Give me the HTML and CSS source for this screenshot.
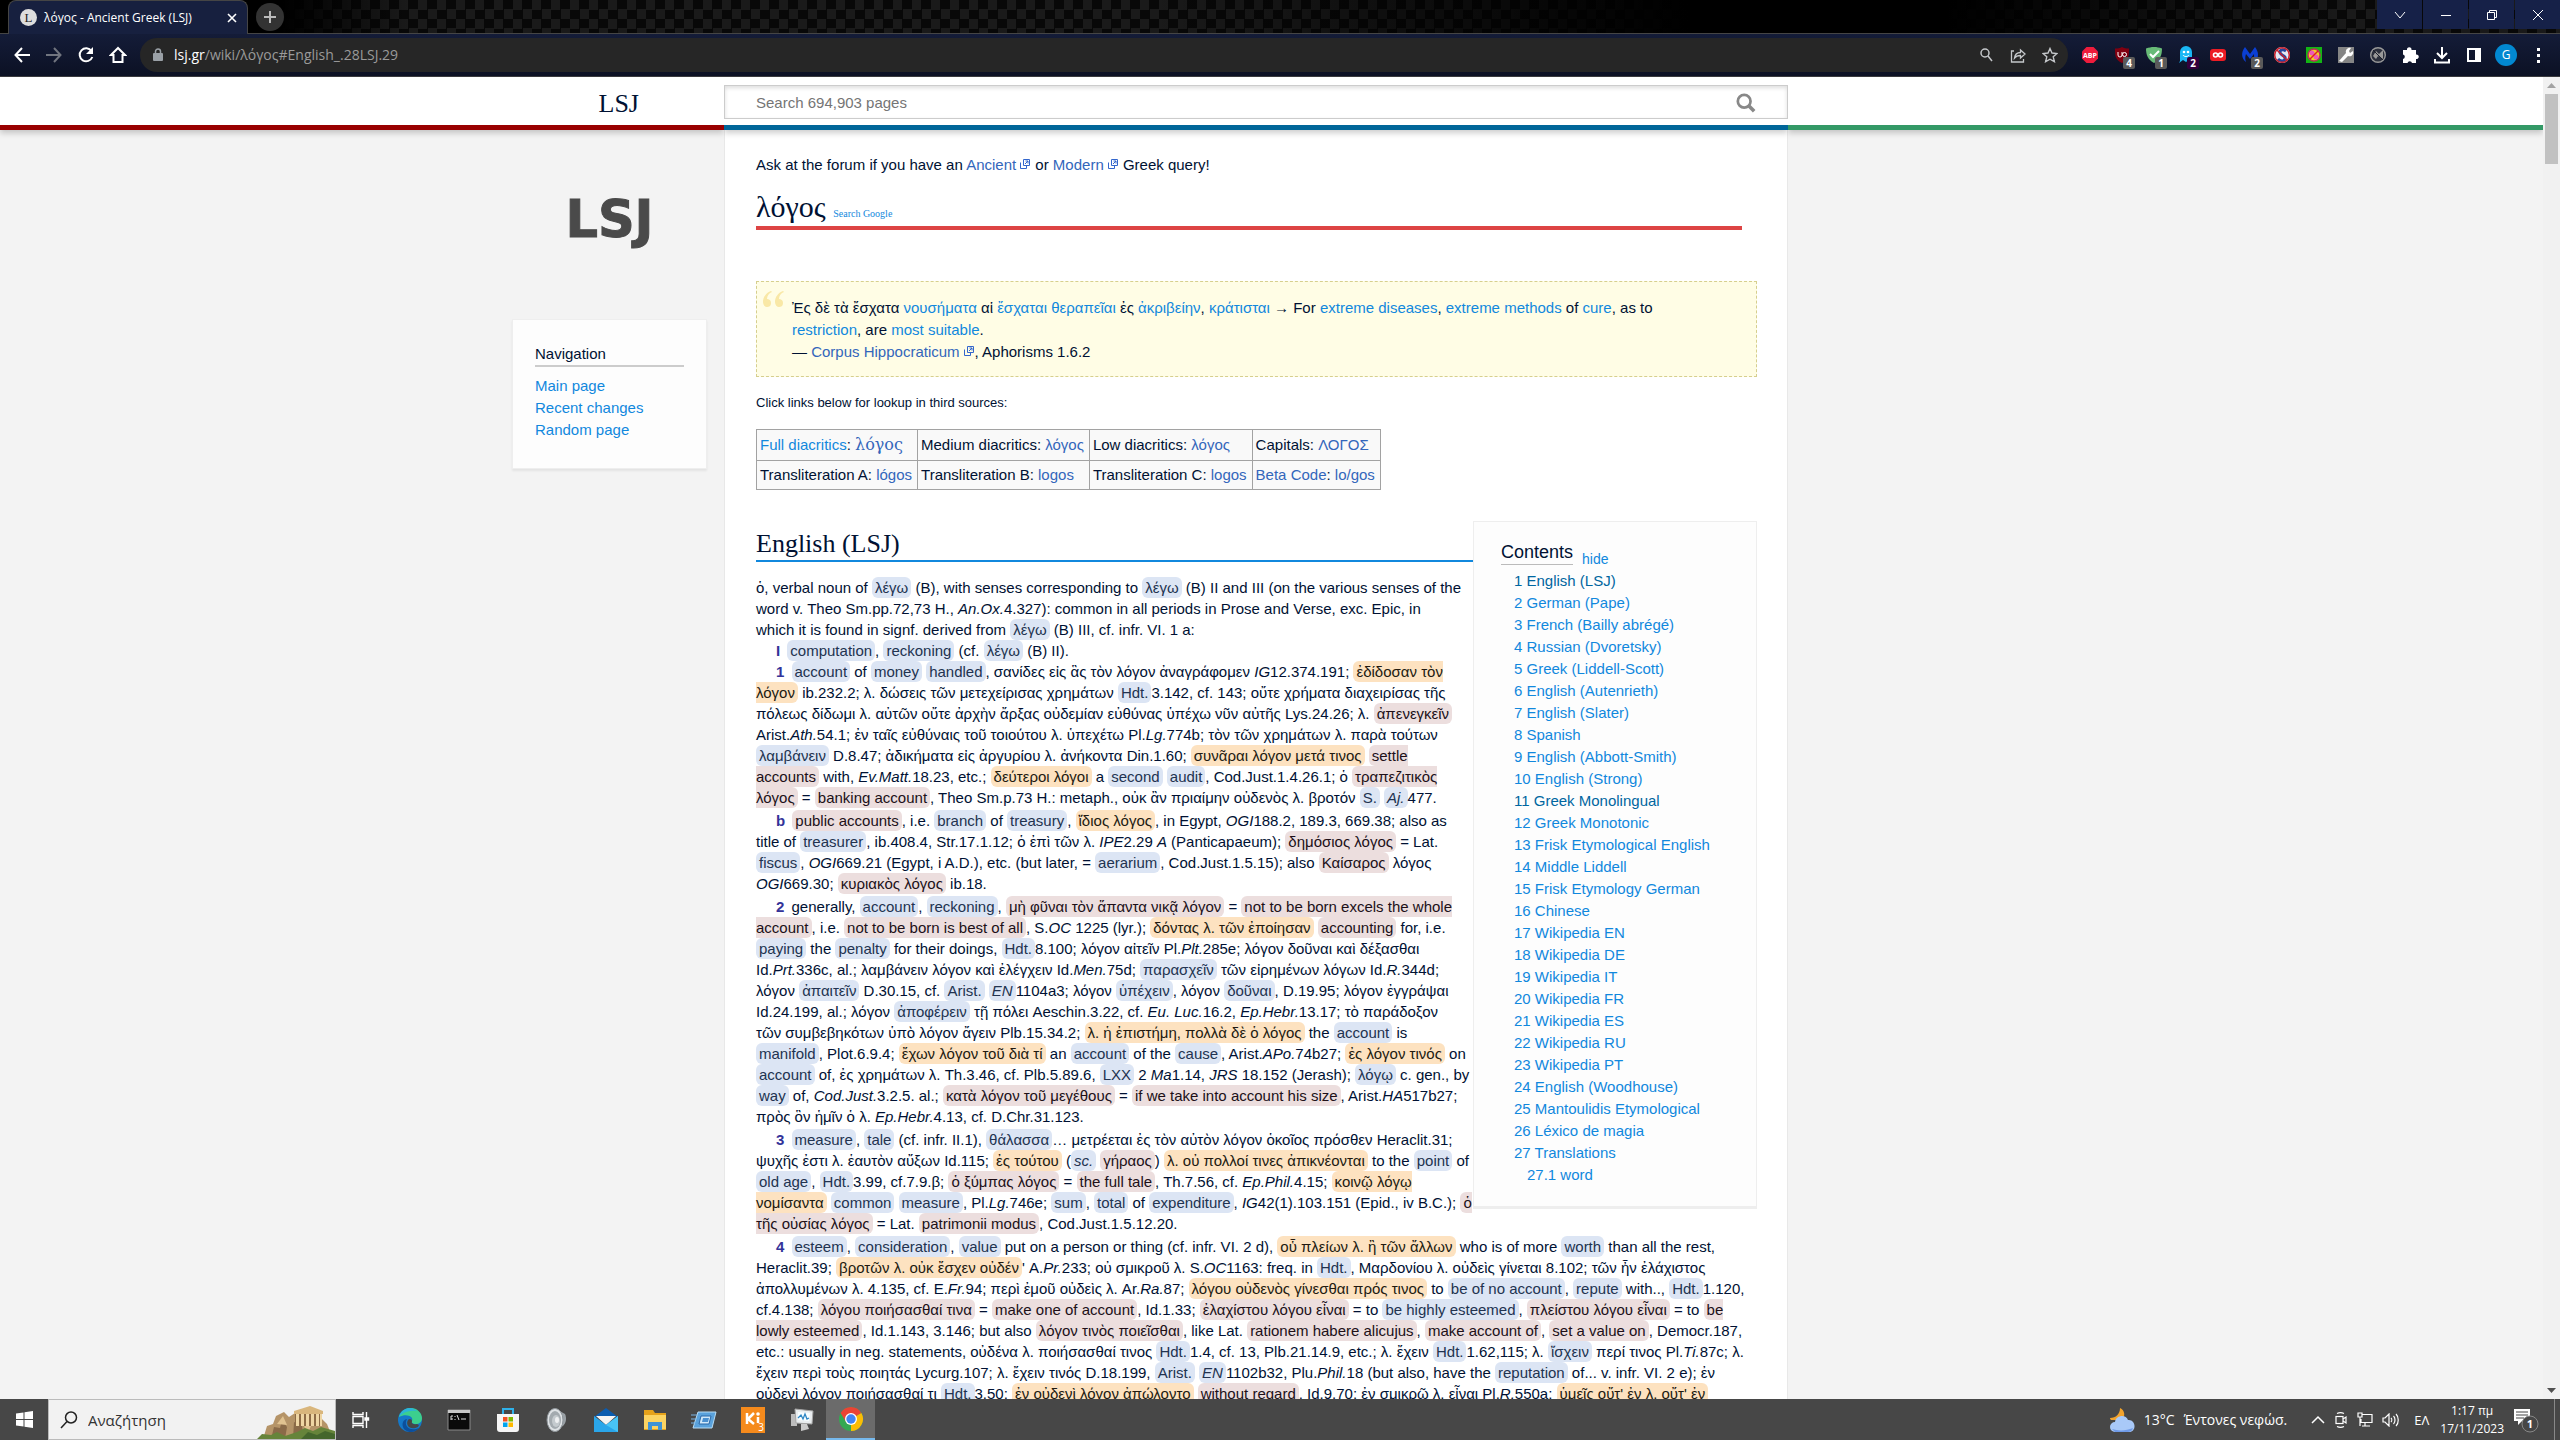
FILE: index.html
```html
<!DOCTYPE html>
<html lang="en">
<head>
<meta charset="utf-8">
<title>λόγος - Ancient Greek (LSJ)</title>
<link rel="stylesheet" href="styles.css">
</head>
<body>
<header class="browser">
  <div class="tabstrip">
    <div class="tab">
      <span class="favicon">L</span>
      <span class="tab-title">λόγος - Ancient Greek (LSJ)</span>
      <button class="bare tab-close" aria-label="Close tab"><svg width="10" height="10" viewBox="0 0 10 10"><path d="M1 1l8 8M9 1L1 9" stroke="#fff" stroke-width="1.6"/></svg></button>
    </div>
    <button class="bare newtab" aria-label="New tab"><svg width="12" height="12" viewBox="0 0 12 12"><path d="M6 0v12M0 6h12" stroke="#bbb" stroke-width="2"/></svg></button>
    <div class="winbuttons">
      <button class="bare" aria-label="Search tabs"><svg width="12" height="12" viewBox="0 0 12 12"><path d="M1 3l5 6 5-6" fill="none" stroke="#fff"/></svg></button>
      <button class="bare" aria-label="Minimize"><svg width="12" height="12" viewBox="0 0 12 12"><path d="M1 6.500h10" stroke="#fff"/></svg></button>
      <button class="bare" aria-label="Restore"><svg width="12" height="12" viewBox="0 0 12 12"><path d="M1.500 3.500h7v7h-7zM3.500 3.500v-2h7v7h-2" fill="none" stroke="#fff"/></svg></button>
      <button class="bare" aria-label="Close"><svg width="12" height="12" viewBox="0 0 12 12"><path d="M1 1l10 10M11 1L1 11" stroke="#fff"/></svg></button>
    </div>
  </div>
  <div class="toolbar">
    <div class="navbuttons">
      <button class="bare" aria-label="Back"><svg width="18" height="18" viewBox="0 0 18 18"><path d="M17 9H3M9 2L2.500 9 9 16" fill="none" stroke="#fff" stroke-width="2"/></svg></button>
      <button class="bare" aria-label="Forward"><svg width="18" height="18" viewBox="0 0 18 18"><path d="M1 9h14M9 2l6.500 7L9 16" fill="none" stroke="#71757f" stroke-width="2"/></svg></button>
      <button class="bare" aria-label="Reload"><svg width="18" height="18" viewBox="0 0 18 18"><path d="M14.500 5A6.500 6.500 0 1 0 15.300 11" fill="none" stroke="#fff" stroke-width="2"/><path d="M16 1v7H9z" fill="#fff"/></svg></button>
      <button class="bare" aria-label="Home"><svg width="18" height="18" viewBox="0 0 18 18"><path d="M9 2L2 9h2.500v7h9V9H16z" fill="none" stroke="#fff" stroke-width="2"/></svg></button>
    </div>
    <div class="urlbar">
      <svg width="10" height="14" viewBox="0 0 10 14"><path d="M2.500 6V3.500a2.500 2.500 0 0 1 5 0V6" fill="none" stroke="#9aa0a6" stroke-width="1.500"/><rect y="5" width="10" height="8" rx="1" fill="#9aa0a6"/></svg>
      <span class="url"><b>lsj.gr</b>/wiki/λόγος#English_.28LSJ.29</span>
      <span class="urlicons">
        <svg width="16" height="16" viewBox="0 0 16 16" fill="none" stroke="#c4c7ca" stroke-width="1.500"><circle cx="7" cy="6" r="4"/><path d="M10 9l4 5"/></svg>
        <svg width="16" height="16" viewBox="0 0 16 16" fill="none" stroke="#c4c7ca" stroke-width="1.300"><path d="M4 4H1.500v11h12v-3M4.500 11c.500-4 2.500-5.500 6-5.500V3l4.500 4-4.500 4V8.500c-3 0-4.500.500-6 2.500z"/></svg>
        <svg width="16" height="16" viewBox="0 0 16 16" fill="none" stroke="#c4c7ca" stroke-width="1.400"><path d="M8 1.500l2 4.500 5 .500-3.800 3.300 1.200 4.900L8 12.200l-4.400 2.500 1.200-4.900L1 6.500 6 6z"/></svg>
      </span>
    </div>
    <div class="extensions">
      <button class="bare" aria-label="ABP"><svg width="18" height="18" viewBox="0 0 18 18"><path d="M5.500 1h7L17 5.500v7L12.500 17h-7L1 12.500v-7z" fill="#ee1c3c"/><text x="9" y="12" font-size="7" font-weight="700" text-anchor="middle" fill="#fff">ABP</text></svg></button>
      <button class="bare" aria-label="uBlock"><svg width="18" height="18" viewBox="0 0 18 18"><path d="M9 1c2 1 4 1.500 7 1.500 0 7 0 11-7 14.500C2 13.500 2 9.500 2 2.500 5 2.500 7 2 9 1z" fill="#800010"/><path d="M5 6v3a2 2 0 0 0 4 0V6" fill="none" stroke="#fff"/><circle cx="11.500" cy="8.500" r="2" fill="none" stroke="#fff"/></svg><i class="badge">4</i></button>
      <button class="bare" aria-label="AdGuard"><svg width="18" height="18" viewBox="0 0 18 18"><path d="M9 1c3 0 5 .500 8 1.500 0 7-2 11-8 14.500C3 13.500 1 9.500 1 2.500 4 1.500 6 1 9 1z" fill="#68bb77"/><path d="M5 8l3 3 6-6" fill="none" stroke="#fff" stroke-width="2"/></svg><i class="badge">1</i></button>
      <button class="bare" aria-label="Ghostery"><svg width="18" height="18" viewBox="0 0 18 18"><path d="M3 15V6a6 6 0 0 1 12 0v9l-3-1-3 2-3-2-4 3z" fill="#1ab7f4"/><circle cx="7" cy="6" r="1.300" fill="#fff"/><circle cx="11" cy="6" r="1.300" fill="#fff"/><path d="M6 9c1 2 5 2 6 0" stroke="#fff" fill="none"/></svg><i class="badge badge-plum">2</i></button>
      <button class="bare" aria-label="Infinity"><svg width="18" height="18" viewBox="0 0 18 18"><rect x="1" y="3" width="16" height="12" rx="3" fill="#ed1c24"/><g fill="none" stroke="#fff" stroke-width="1.600"><circle cx="6.500" cy="9" r="2"/><circle cx="11.500" cy="9" r="2"/></g></svg></button>
      <button class="bare" aria-label="Malwarebytes"><svg width="18" height="18" viewBox="0 0 18 18"><path d="M5 16C0 12 0 6 4 1l5 7 5-7c4 5 4 11 0 14-1-2-1-5-1-7l-4 5-4-5c-1 3-1 5 0 8z" fill="#0b3fd4"/></svg><i class="badge">2</i></button>
      <button class="bare" aria-label="Skype blocker"><svg width="18" height="18" viewBox="0 0 18 18"><circle cx="9" cy="9" r="8" fill="#e4e8f2"/><path d="M13 5c-4-3-8 0-5 3s5 2 4 5-5 2-7 0" fill="none" stroke="#2448a0" stroke-width="3"/><circle cx="9" cy="9" r="7.300" fill="none" stroke="#c8202c" stroke-width="1.500"/><path d="M4 4l10 10" stroke="#c8202c" stroke-width="1.500"/></svg></button>
      <button class="bare" aria-label="Popup blocker"><svg width="18" height="18" viewBox="0 0 18 18"><path d="M1 1h16v16H1z" fill="#14b514"/><circle cx="9" cy="9" r="6" fill="#f5d020" stroke="#c22c5c" stroke-width="1.500"/><circle cx="7" cy="7" r="2.500" fill="#ee58b8"/><circle cx="11" cy="11" r="2.500" fill="#ee58b8"/><path d="M13 5l-8 8" stroke="#d22" stroke-width="1.500"/></svg></button>
      <button class="bare" aria-label="Wrench"><svg width="18" height="18" viewBox="0 0 18 18"><path d="M1 1h16v16H1z" fill="#858585"/><path d="M2 15l7-8c-1-3 2-6 5-5l-2 3 1 2 3-2c1 4-2 6-5 5l-6 6z" fill="#fff"/></svg></button>
      <button class="bare" aria-label="Muted"><svg width="18" height="18" viewBox="0 0 18 18"><circle cx="9" cy="9" r="7.300" fill="#2b2f3c" stroke="#999" stroke-width="1.400"/><path d="M4 10l3-5 3 3 4-4v9l-5-3-2 3z" fill="#999"/><path d="M4 4l10 10" stroke="#1a1e2c"/></svg></button>
      <button class="bare" aria-label="Extensions"><svg width="18" height="18" viewBox="0 0 18 18"><path d="M2 4h4a2.300 2.300 0 1 1 4.500 0H15v4.500a2.300 2.300 0 1 1 0 4.500v4H11a2.300 2.300 0 0 0-4.500 0H2v-4a2.300 2.300 0 0 0 0-4.500z" fill="#fff"/></svg></button>
      <button class="bare" aria-label="Downloads"><svg width="18" height="18" viewBox="0 0 18 18"><path d="M9 1v10M4 7l5 5 5-5M2 13v3.500h14V13" fill="none" stroke="#fff" stroke-width="2"/></svg></button>
      <button class="bare" aria-label="Side panel"><svg width="18" height="18" viewBox="0 0 18 18"><path d="M3 3h8v12H3z" fill="none" stroke="#fff" stroke-width="2"/><path d="M11 2h5v14h-5z" fill="#fff"/></svg></button>
      <button class="bare avatar" aria-label="Profile">G</button>
      <button class="bare" aria-label="Menu"><svg width="18" height="18" viewBox="0 0 18 18" fill="#fff"><path d="M8 2h3v3H8zM8 8h3v3H8zM8 14h3v3H8z"/></svg></button>
    </div>
  </div>
</header>

<div class="viewport">
<div class="page">
  <div class="head head-red"><a class="sitename" href="#">LSJ</a></div>
  <form class="head head-blue">
    <div class="searchbox">
      <input type="text" aria-label="Search" placeholder="Search 694,903 pages">
      <button type="button" class="bare" aria-label="Go"><svg width="20" height="20" viewBox="0 0 22 22"><circle cx="9" cy="9" r="7" fill="none" stroke="#888" stroke-width="3"/><path d="M14 14l6 6" stroke="#888" stroke-width="4"/></svg></button>
    </div>
  </form>
  <div class="head head-green"></div>

  <aside class="side">
    <a class="logo" href="#">LSJ</a>
    <nav class="navcard">
      <h3>Navigation</h3>
      <a href="#">Main page</a>
      <a href="#">Recent changes</a>
      <a href="#">Random page</a>
    </nav>
  </aside>

  <main class="content">
    <p class="notice">Ask at the forum if you have an <a class="x" href="#">Ancient<svg class="ext" viewBox="0 0 12 12"><path d="M1.500 4.500v6h6v-3M4.500 1.500h6v6h-6z" fill="none" stroke="#36c"/><path d="M6 6l3-3M6.500 3H9v2.500" fill="none" stroke="#36c"/></svg></a> or <a class="x" href="#">Modern<svg class="ext" viewBox="0 0 12 12"><path d="M1.500 4.500v6h6v-3M4.500 1.500h6v6h-6z" fill="none" stroke="#36c"/><path d="M6 6l3-3M6.500 3H9v2.500" fill="none" stroke="#36c"/></svg></a> Greek query!</p>
    <h1>λόγος <a href="#">Search Google</a></h1>
    <blockquote>
      <svg class="mark" width="21" height="16" viewBox="0 0 21 16" fill="#f9e8a6"><path d="M8 0C3 2 0 6 0 11c0 3 2 5 4 5s4-1 4-4-2-4-4-4c0-3 2-6 5-7zM20 0c-5 2-8 6-8 11 0 3 2 5 4 5s4-1 4-4-2-4-4-4c0-3 2-6 5-7z"/></svg>
      <p>Ἐς δὲ τὰ ἔσχατα <a href="#">νουσήματα</a> αἱ <a href="#">ἔσχαται</a> <a href="#">θεραπεῖαι</a> ἐς <a href="#">ἀκριβείην</a>, <a href="#">κράτισται</a> → For <a href="#">extreme diseases</a>, <a href="#">extreme methods</a> of <a href="#">cure</a>, as to<br><a href="#">restriction</a>, are <a href="#">most suitable</a>.<br>— <a class="x" href="#">Corpus Hippocraticum<svg class="ext" viewBox="0 0 12 12"><path d="M1.500 4.500v6h6v-3M4.500 1.500h6v6h-6z" fill="none" stroke="#36c"/><path d="M6 6l3-3M6.500 3H9v2.500" fill="none" stroke="#36c"/></svg></a>, Aphorisms 1.6.2</p>
    </blockquote>
    <p class="small">Click links below for lookup in third sources:</p>
    <table class="forms">
      <tr><td><a href="#">Full diacritics</a>: <a class="x big" href="#">λόγος</a></td><td>Medium diacritics: <a class="x" href="#">λόγος</a></td><td>Low diacritics: <a class="x" href="#">λόγος</a></td><td>Capitals: <a class="x" href="#">ΛΟΓΟΣ</a></td></tr>
      <tr><td>Transliteration A: <a class="x" href="#">lógos</a></td><td>Transliteration B: <a class="x" href="#">logos</a></td><td>Transliteration C: <a class="x" href="#">logos</a></td><td><a class="x" href="#">Beta Code</a>: <a class="x" href="#">lo/gos</a></td></tr>
    </table>

    <div class="split">
      <section class="entry">
        <h2>English (LSJ)</h2>
        <p>ὁ, verbal noun of <a class="w" href="#">λέγω</a> (B), with senses corresponding to <a class="w" href="#">λέγω</a> (B) II and III (on the various senses of the<br>
        word v. Theo Sm.pp.72,73 H., <i>An.Ox.</i>4.327): common in all periods in Prose and Verse, exc. Epic, in<br>
        which it is found in signf. derived from <a class="w" href="#">λέγω</a> (B) III, cf. infr. VI. 1 a:</p>
        <p class="sense"><b>I</b> <a class="w" href="#">computation</a>, <a class="w" href="#">reckoning</a> (cf. <a class="w" href="#">λέγω</a> (B) II).</p>
        <p class="sense"><b>1</b> <a class="w" href="#">account</a> of <a class="w" href="#">money</a> <a class="w" href="#">handled</a>, σανίδες εἰς ἃς τὸν λόγον ἀναγράφομεν <i>IG</i>12.374.191; <span class="g">ἐδίδοσαν τὸν<br>
        λόγον</span> ib.232.2; λ. δώσεις τῶν μετεχείρισας χρημάτων <a class="w" href="#">Hdt.</a>3.142, cf. 143; οὔτε χρήματα διαχειρίσας τῆς<br>
        πόλεως δίδωμι λ. αὐτῶν οὔτε ἀρχὴν ἄρξας οὐδεμίαν εὐθύνας ὑπέχω νῦν αὐτῆς Lys.24.26; λ. <span class="p">ἀπενεγκεῖν</span><br>
        Arist.<i>Ath.</i>54.1; ἐν ταῖς εὐθύναις τοῦ τοιούτου λ. ὑπεχέτω Pl.<i>Lg.</i>774b; τὸν τῶν χρημάτων λ. παρὰ τούτων<br>
        <a class="w" href="#">λαμβάνειν</a> D.8.47; ἀδικήματα εἰς ἀργυρίου λ. ἀνήκοντα Din.1.60; <span class="g">συνᾶραι λόγον μετά τινος</span> <span class="p">settle<br>
        accounts</span> with, <i>Ev.Matt.</i>18.23, etc.; <span class="g">δεύτεροι λόγοι</span> a <a class="w" href="#">second</a> <a class="w" href="#">audit</a>, Cod.Just.1.4.26.1; ὁ <span class="p">τραπεζιτικὸς<br>
        λόγος</span> = <span class="p">banking account</span>, Theo Sm.p.73 H.: metaph., οὐκ ἂν πριαίμην οὐδενὸς λ. βροτόν <a class="w" href="#">S.</a> <a class="w" href="#"><i>Aj.</i></a>477.</p>
        <p class="sense"><b>b</b> <span class="p">public accounts</span>, i.e. <a class="w" href="#">branch</a> of <a class="w" href="#">treasury</a>, <span class="g">ἴδιος λόγος</span>, in Egypt, <i>OGI</i>188.2, 189.3, 669.38; also as<br>
        title of <a class="w" href="#">treasurer</a>, ib.408.4, Str.17.1.12; ὁ ἐπὶ τῶν λ. <i>IPE</i>2.29 <i>A</i> (Panticapaeum); <span class="p">δημόσιος λόγος</span> = Lat.<br>
        <a class="w" href="#">fiscus</a>, <i>OGI</i>669.21 (Egypt, i A.D.), etc. (but later, = <a class="w" href="#">aerarium</a>, Cod.Just.1.5.15); also <span class="p">Καίσαρος</span> λόγος<br>
        <i>OGI</i>669.30; <span class="p">κυριακὸς λόγος</span> ib.18.</p>
        <p class="sense"><b>2</b> generally, <a class="w" href="#">account</a>, <a class="w" href="#">reckoning</a>, <span class="p">μὴ φῦναι τὸν ἅπαντα νικᾷ λόγον</span> = <span class="p">not to be born excels the whole<br>
        account</span>, i.e. <span class="p">not to be born is best of all</span>, S.<i>OC</i> 1225 (lyr.); <span class="g">δόντας λ. τῶν ἐποίησαν</span> <span class="p">accounting</span> for, i.e.<br>
        <a class="w" href="#">paying</a> the <a class="w" href="#">penalty</a> for their doings, <a class="w" href="#">Hdt.</a>8.100; λόγον αἰτεῖν Pl.<i>Plt.</i>285e; λόγον δοῦναι καὶ δέξασθαι<br>
        Id.<i>Prt.</i>336c, al.; λαμβάνειν λόγον καὶ ἐλέγχειν Id.<i>Men.</i>75d; <a class="w" href="#">παρασχεῖν</a> τῶν εἰρημένων λόγων Id.<i>R.</i>344d;<br>
        λόγον <a class="w" href="#">ἀπαιτεῖν</a> D.30.15, cf. <a class="w" href="#">Arist.</a> <a class="w" href="#"><i>EN</i></a>1104a3; λόγον <a class="w" href="#">ὑπέχειν</a>, λόγον <a class="w" href="#">δοῦναι</a>, D.19.95; λόγον ἐγγράψαι<br>
        Id.24.199, al.; λόγον <a class="w" href="#">ἀποφέρειν</a> τῇ πόλει Aeschin.3.22, cf. <i>Eu. Luc.</i>16.2, <i>Ep.Hebr.</i>13.17; τὸ παράδοξον<br>
        τῶν συμβεβηκότων ὑπὸ λόγον ἄγειν Plb.15.34.2; <span class="g">λ. ἡ ἐπιστήμη, πολλὰ δὲ ὁ λόγος</span> the <a class="w" href="#">account</a> is<br>
        <a class="w" href="#">manifold</a>, Plot.6.9.4; <span class="g">ἔχων λόγον τοῦ διὰ τί</span> an <a class="w" href="#">account</a> of the <a class="w" href="#">cause</a>, Arist.<i>APo.</i>74b27; <span class="g">ἐς λόγον τινός</span> on<br>
        <a class="w" href="#">account</a> of, ἐς χρημάτων λ. Th.3.46, cf. Plb.5.89.6, <a class="w" href="#">LXX</a> 2 <i>Ma</i>1.14, <i>JRS</i> 18.152 (Jerash); <a class="w" href="#">λόγῳ</a> c. gen., by<br>
        <a class="w" href="#">way</a> of, <i>Cod.Just.</i>3.2.5. al.; <span class="p">κατὰ λόγον τοῦ μεγέθους</span> = <span class="p">if we take into account his size</span>, Arist.<i>HA</i>517b27;<br>
        πρὸς ὃν ἡμῖν ὁ λ. <i>Ep.Hebr.</i>4.13, cf. D.Chr.31.123.</p>
        <p class="sense"><b>3</b> <a class="w" href="#">measure</a>, <a class="w" href="#">tale</a> (cf. infr. II.1), <a class="w" href="#">θάλασσα</a>… μετρέεται ἐς τὸν αὐτὸν λόγον ὁκοῖος πρόσθεν Heraclit.31;<br>
        ψυχῆς ἐστι λ. ἑαυτὸν αὔξων Id.115; <span class="g">ἐς τούτου</span> (<a class="w" href="#"><i>sc.</i></a> <span class="p">γήραος</span>) <span class="g">λ. οὐ πολλοί τινες ἀπικνέονται</span> to the <a class="w" href="#">point</a> of<br>
        <a class="w" href="#">old age</a>, <a class="w" href="#">Hdt.</a>3.99, cf.7.9.β; <span class="p">ὁ ξύμπας λόγος</span> = <span class="p">the full tale</span>, Th.7.56, cf. <i>Ep.Phil.</i>4.15; <span class="g">κοινῷ λόγῳ<br>
        νομίσαντα</span> <a class="w" href="#">common</a> <a class="w" href="#">measure</a>, Pl.<i>Lg.</i>746e; <a class="w" href="#">sum</a>, <a class="w" href="#">total</a> of <a class="w" href="#">expenditure</a>, <i>IG</i>42(1).103.151 (Epid., iv B.C.); <span class="p">ὁ<br>
        τῆς οὐσίας λόγος</span> = Lat. <span class="p">patrimonii modus</span>, Cod.Just.1.5.12.20.</p>
      </section>
      <nav class="toc">
        <div class="toc-head"><h3>Contents</h3><button class="bare">hide</button></div>
        <ul>
          <li><a class="seen" href="#">1 English (LSJ)</a></li>
          <li><a href="#">2 German (Pape)</a></li>
          <li><a href="#">3 French (Bailly abrégé)</a></li>
          <li><a href="#">4 Russian (Dvoretsky)</a></li>
          <li><a href="#">5 Greek (Liddell-Scott)</a></li>
          <li><a href="#">6 English (Autenrieth)</a></li>
          <li><a href="#">7 English (Slater)</a></li>
          <li><a href="#">8 Spanish</a></li>
          <li><a href="#">9 English (Abbott-Smith)</a></li>
          <li><a href="#">10 English (Strong)</a></li>
          <li><a class="seen" href="#">11 Greek Monolingual</a></li>
          <li><a href="#">12 Greek Monotonic</a></li>
          <li><a href="#">13 Frisk Etymological English</a></li>
          <li><a href="#">14 Middle Liddell</a></li>
          <li><a href="#">15 Frisk Etymology German</a></li>
          <li><a href="#">16 Chinese</a></li>
          <li><a href="#">17 Wikipedia EN</a></li>
          <li><a href="#">18 Wikipedia DE</a></li>
          <li><a href="#">19 Wikipedia IT</a></li>
          <li><a href="#">20 Wikipedia FR</a></li>
          <li><a href="#">21 Wikipedia ES</a></li>
          <li><a href="#">22 Wikipedia RU</a></li>
          <li><a href="#">23 Wikipedia PT</a></li>
          <li><a href="#">24 English (Woodhouse)</a></li>
          <li><a href="#">25 Mantoulidis Etymological</a></li>
          <li><a href="#">26 Léxico de magia</a></li>
          <li><a href="#">27 Translations</a>
            <ul><li><a href="#">27.1 word</a></li></ul>
          </li>
        </ul>
      </nav>
    </div>
    <section class="entry">
      <p class="sense"><b>4</b> <a class="w" href="#">esteem</a>, <a class="w" href="#">consideration</a>, <a class="w" href="#">value</a> put on a person or thing (cf. infr. VI. 2 d), <span class="g">οὗ πλείων λ. ἢ τῶν ἄλλων</span> who is of more <a class="w" href="#">worth</a> than all the rest,<br>
      Heraclit.39; <span class="g">βροτῶν λ. οὐκ ἔσχεν οὐδέν</span>' A.<i>Pr.</i>233; οὐ σμικροῦ λ. S.<i>OC</i>1163: freq. in <a class="w" href="#">Hdt.</a>, Μαρδονίου λ. οὐδεὶς γίνεται 8.102; τῶν ἦν ἐλάχιστος<br>
      ἀπολλυμένων λ. 4.135, cf. E.<i>Fr.</i>94; περὶ ἐμοῦ οὐδεὶς λ. Ar.<i>Ra.</i>87; <span class="g">λόγου οὐδενὸς γίνεσθαι πρός τινος</span> to <a class="w" href="#">be of no account</a>, <a class="w" href="#">repute</a> with.., <a class="w" href="#">Hdt.</a>1.120,<br>
      cf.4.138; <span class="p">λόγου ποιήσασθαί τινα</span> = <span class="p">make one of account</span>, Id.1.33; <span class="p">ἐλαχίστου λόγου εἶναι</span> = to <a class="w" href="#">be highly esteemed</a>, <span class="p">πλείστου λόγου εἶναι</span> = to <span class="p">be<br>
      lowly esteemed</span>, Id.1.143, 3.146; but also <span class="p">λόγον τινὸς ποιεῖσθαι</span>, like Lat. <span class="p">rationem habere alicujus</span>, <span class="p">make account of</span>, <span class="p">set a value on</span>, Democr.187,<br>
      etc.: usually in neg. statements, οὐδένα λ. ποιήσασθαί τινος <a class="w" href="#">Hdt.</a>1.4, cf. 13, Plb.21.14.9, etc.; λ. ἔχειν <a class="w" href="#">Hdt.</a>1.62,115; λ. <a class="w" href="#">ἴσχειν</a> περί τινος Pl.<i>Ti.</i>87c; λ.<br>
      ἔχειν περὶ τοὺς ποιητάς Lycurg.107; λ. ἔχειν τινός D.18.199, <a class="w" href="#">Arist.</a> <a class="w" href="#"><i>EN</i></a>1102b32, Plu.<i>Phil.</i>18 (but also, have the <a class="w" href="#">reputation</a> of... v. infr. VI. 2 e); ἐν<br>
      οὐδενὶ λόγον ποιήσασθαί τι <a class="w" href="#">Hdt.</a>3.50; <span class="g">ἐν οὐδενὶ λόγον ἀπώλοντο</span> <span class="p">without regard</span>, Id.9.70; ἐν σμικρῷ λ. εἶναι Pl.<i>R.</i>550a; <span class="g">ὑμεῖς οὔτ' ἐν λ. οὔτ' ἐν</span></p>
    </section>
  </main>
</div>
<div class="scrollbar"><svg width="9" height="5" viewBox="0 0 9 5"><path d="M0 5l4.500-5L9 5z" fill="#a3a3a3"/></svg><span class="thumb"></span><svg width="9" height="5" viewBox="0 0 9 5"><path d="M0 0l4.500 5L9 0z" fill="#505050"/></svg></div>
</div>

<footer class="taskbar">
  <button class="bare start" aria-label="Start"><svg width="17" height="17" viewBox="0 0 17 17" fill="#fff"><path d="M0 2.500l7.500-1v6.500H0zM8.500 1.300L17 0v8H8.500zM0 9h7.500v6.500L0 14.500zM8.500 9H17v8l-8.500-1.300z"/></svg></button>
  <label class="tasksearch">
    <svg width="18" height="18" viewBox="0 0 18 18" fill="none" stroke="#222" stroke-width="1.500"><circle cx="11" cy="6.500" r="5.500"/><path d="M7 10.500L1 17"/></svg>
    <input type="text" aria-label="Αναζήτηση" placeholder="Αναζήτηση">
    <svg width="78" height="34" viewBox="0 0 78 34"><path d="M6 34l4-13 6-2 3-8 8-4 5 5 6-4 10 3 12-2 10 10 6 15z" fill="#b59468"/><path d="M14 34l3-12 6 1 2-8 5 7-2 12zM36 34l1-17 8 4 2 13z" fill="#8a6a48"/><path d="M20 19l6-8 4 9zM45 14l9 7-4 9z" fill="#e0c290"/><path d="M37 6l16-5 13 5v3H37z" fill="#d9b67c"/><path d="M38 9h27v12H38z" fill="#8d6b45"/><path d="M39 9h3v12h-3zM44 9h3v12h-3zM49 9h3v12h-3zM54 9h3v12h-3zM59 9h3v12h-3zM63 9h2v12h-2z" fill="#efd6a4"/><path d="M0 34l5-5 9 1 6-3 8 4 12-4 8-4 8 3 8-4 14 4v8z" fill="#66843a"/><path d="M44 34l7-7 9 3 8-4 10 3v5z" fill="#44662c"/></svg>
  </label>
  <div class="apps">
    <button class="bare" aria-label="Task view"><svg width="18" height="18" viewBox="0 0 18 18" fill="none" stroke="#fff" stroke-width="1.400"><path d="M1 5.500h10v7H1zM1 1v2.500h10V1M1 17v-2.500h10V17M14.500 1v16"/><path d="M13 7h3.500v2H13z" fill="#fff"/></svg></button>
    <button class="bare" aria-label="Edge"><svg width="26" height="26" viewBox="0 0 26 26"><circle cx="13" cy="13" r="12" fill="#1578c8"/><path d="M2 10C4 3 10 1 14 1c6 0 11 5 11 10 0 4-3 6-6 6-3 0-5-1-4-3 2-4-5-8-13-4z" fill="#3ccf8e"/><path d="M2 10C4 3 9 1 13 1c3 0 6 2 7 3-8-1-14 1-18 6z" fill="#2bb5d8"/><path d="M10 12c-4 7 3 13 12 9-4 5-10 5-14 2-4-4-3-10 2-11z" fill="#0c4f9c"/><path d="M15 14c-1 2 1 4 5 3l2 1-1 2c-8 4-13-2-10-7 1-2 4-1 4 1z" fill="#474747"/></svg></button>
    <button class="bare" aria-label="Command prompt"><svg width="24" height="22" viewBox="0 0 24 22"><path d="M1 1h22v20H1z" fill="#0a0a0a" stroke="#8a8a8a"/><path d="M1 1h22v3H1z" fill="#c8c8c8"/><path d="M4 7v4M4 7h2M4 10h2M8 7v1M8 10v1M10 6l2 5M14 10h5" stroke="#ddd"/></svg></button>
    <button class="bare" aria-label="Store"><svg width="24" height="26" viewBox="0 0 24 26"><path d="M7 8V2h10v6" fill="none" stroke="#2fb1ea" stroke-width="2"/><path d="M1 7h22v15a3 3 0 0 1-3 3H4a3 3 0 0 1-3-3z" fill="#f6f6f6"/><path d="M7 10h4.500v4.500H7z" fill="#f25022"/><path d="M12.500 10H17v4.500h-4.500z" fill="#7fba00"/><path d="M7 15.500h4.500V20H7z" fill="#00a4ef"/><path d="M12.500 15.500H17V20h-4.500z" fill="#ffb900"/></svg></button>
    <button class="bare" aria-label="Speaker"><svg width="24" height="26" viewBox="0 0 24 26"><path d="M13 3l7 4c2 4 1 9-2 12l-7 4z" fill="#9aa1a6"/><ellipse cx="10" cy="13" rx="8" ry="11.500" fill="#dfe3e6" stroke="#8d9499"/><ellipse cx="10" cy="13" rx="6" ry="9" fill="#a3aaaf"/><ellipse cx="11" cy="14" rx="4" ry="6" fill="#c4cace"/><ellipse cx="12" cy="13" rx="2" ry="3" fill="#eef0f2"/></svg></button>
    <button class="bare" aria-label="Mail"><svg width="26" height="26" viewBox="0 0 26 26"><path d="M1 10L13 1l12 9z" fill="#0a5cb0"/><path d="M3 9h20l-10 9z" fill="#f4f4f4"/><path d="M1 9l12 9 12-9v16H1z" fill="#2aa6ea"/><path d="M25 9v16L13 18z" fill="#48c4f6"/></svg></button>
    <button class="bare" aria-label="Explorer"><svg width="24" height="22" viewBox="0 0 24 22"><path d="M1 1h9l2 3h11v17H1z" fill="#e6a21a"/><path d="M1 6h22v14H1z" fill="#fcd462"/><path d="M5 21v-8h14v8h-4v-4H9v4z" fill="#3f93d6"/></svg></button>
    <button class="bare" aria-label="Run"><svg width="26" height="20" viewBox="0 0 26 20"><path d="M7 2h18l-4 16H2z" fill="#5aa2dc" stroke="#b8dcf4"/><path d="M10 6h10l-2 8H8z" fill="#cfe8fa" stroke="#2b68a8"/><path d="M12 8h6l-1 4h-6z" fill="#4a90d0"/><path d="M0 5h6M0 9h5M0 13h4" stroke="#7ab4e4"/></svg></button>
    <button class="bare" aria-label="Kies"><svg width="24" height="26" viewBox="0 0 24 26"><path d="M0 0h24v26H0z" fill="#f58a1c"/><path d="M6 6v11M13 6l-6 6 6 5M17 10v6" fill="none" stroke="#fff" stroke-width="2.500"/><circle cx="17" cy="7" r="1.800" fill="#fff"/><text x="20" y="24" font-size="10" text-anchor="middle" fill="#fff">3</text></svg></button>
    <button class="bare" aria-label="Monitor"><svg width="24" height="24" viewBox="0 0 24 24"><path d="M1 6h6v12H1z" fill="#bdbdbd"/><path d="M5 1l18 2-1 13-16-1z" fill="#e9edef" stroke="#a5a5a5"/><path d="M8 4l12 1-1 8-11-1z" fill="#f7fdff"/><path d="M8 10l3-3 2 4 2-5 2 5 2-1" fill="none" stroke="#2d86c4" stroke-width="1.300"/><path d="M11 16h6l2 5-8 2z" fill="#cacaca"/></svg></button>
    <button class="bare running" aria-label="Chrome"><svg width="26" height="26" viewBox="0 0 26 26"><circle cx="13" cy="13" r="12" fill="#34a853"/><path d="M13 13L2.600 7A12 12 0 0 1 23.400 7z" fill="#ea4335"/><path d="M13 13L23.400 7A12 12 0 0 1 13 25z" fill="#fbbc05"/><path d="M2.600 7l5.500 9L13 7z" fill="#ea4335"/><circle cx="13" cy="13" r="6" fill="#fff"/><circle cx="13" cy="13" r="4.700" fill="#4285f4"/></svg></button>
  </div>
  <div class="weather">
    <svg width="26" height="26" viewBox="0 0 26 26"><path d="M11 1c5 2 6 9 1 12H2c-1-1-1-2-1-2 6 0 10-4 10-10z" fill="#f2a32c"/><path d="M6 25a5 5 0 0 1 0-10c1-7 11-8 13-2 8-1 9 12 1 12z" fill="#a9c9f8"/><path d="M3 22c6 2 14 2 21-1-1 3-3 4-5 4H6z" fill="#6f9ae6"/></svg>
    <span>13°C</span><span>Έντονες νεφώσ.</span>
  </div>
  <div class="tray">
    <svg width="14" height="14" viewBox="0 0 14 14"><path d="M1 10l6-6 6 6" fill="none" stroke="#fff" stroke-width="1.500"/></svg>
    <svg width="14" height="16" viewBox="0 0 14 16" fill="none" stroke="#fff" stroke-width="1.200"><rect x="2" y="4.500" width="7" height="7"/><path d="M9 7l3-2v6l-3-2M3 1.500c2-1 5-1 7 0M3 14.500c2 1 5 1 7 0"/></svg>
    <svg width="16" height="15" viewBox="0 0 16 15" fill="none" stroke="#fff" stroke-width="1.200"><path d="M5 2.500h10v8H4V7M8 10.500V14M5 14h8M1 1h4v4H1zM3 5v9"/></svg>
    <svg width="18" height="14" viewBox="0 0 18 14" fill="none" stroke="#fff" stroke-width="1.200"><path d="M1 5h2l4-4v12L3 9H1zM9 5c1 1 1 3 0 4M11.500 3c2 2 2 6 0 8M14 1c3 3 3 9 0 12"/></svg>
  </div>
  <span class="lang">ΕΛ</span>
  <div class="clock"><span>1:17 πμ</span><span>17/11/2023</span></div>
  <button class="bare notify" aria-label="Notifications"><svg width="26" height="26" viewBox="0 0 26 26"><path d="M1 2h16v12H9l-4 4v-4H1z" fill="#fff"/><path d="M3 5h12M3 8h12M3 11h8" stroke="#464646"/><circle cx="17" cy="17" r="8" fill="#464646" stroke="#888"/><text x="17" y="21" font-size="11" font-weight="700" text-anchor="middle" fill="#fff">1</text></svg></button>
</footer>
</body>
</html>
```
FILE: styles.css
```css
* { box-sizing: border-box; }
body {
  margin: 0;
  height: 100vh;
  display: flex;
  flex-direction: column;
  font: 15px/22px "Liberation Sans", Arial, sans-serif;
  color: #001133;
  background: #f3f3f3;
}
a { color: #1188dd; text-decoration: none; }
h1, h2, h3, p, ul, blockquote { margin: 0; padding: 0; font-weight: 400; }
svg { display: block; flex: none; }
.bare {
  display: flex; align-items: center; justify-content: center;
  padding: 0; border: 0; background: none; font: inherit; color: inherit; position: relative;
}

/* browser frame */
.browser { flex: none; font-family: "Open Sans", sans-serif; font-size: 12px; }
.tabstrip {
  display: flex; align-items: flex-start; height: 34px; padding-left: 8px;
  border-bottom: 1px solid #454545;
  background:
    linear-gradient(90deg, #000 11%, transparent 16%, transparent 45%, #000 66%, #000 76%, transparent 92%),
    repeating-conic-gradient(#080808 0 25%, #1a1a1a 0 50%) 0 0 / 19px 19px;
}
.tab {
  display: flex; align-items: center; gap: 7px; width: 240px; height: 34px; padding: 0 10px 0 11px;
  border: 1px solid #454545; border-bottom: 0; border-radius: 8px 8px 0 0;
  background: #17203f; color: #fff;
}
.favicon { width: 17px; height: 17px; border-radius: 50%; background: #ddd; color: #222; font: 13px/17px "Liberation Serif", serif; text-align: center; }
.tab-title { flex: 1; white-space: nowrap; }
.newtab { width: 28px; height: 28px; margin: 3px 0 0 8px; border-radius: 50%; background: #333; }
.winbuttons { display: flex; gap: 1px; margin-left: auto; }
.winbuttons .bare { width: 45px; height: 29px; background: #162148; }
.toolbar {
  display: flex; align-items: center; height: 43px; padding-left: 6px;
  border-bottom: 1px solid #3a3a3e;
  background: linear-gradient(#141c38, #0c1124);
}
.navbuttons { display: flex; width: 134px; }
.navbuttons .bare { width: 32px; height: 32px; }
.urlbar {
  display: flex; align-items: center; flex: 1; height: 34px; padding: 0 10px 0 13px; gap: 11px;
  border-radius: 17px; background: #262626; color: #9a9a9a; font-size: 14px; white-space: nowrap;
}
.url { flex: 1; }
.url b { font-weight: 400; color: #fff; }
.urlicons { display: flex; gap: 16px; }
.extensions { display: flex; align-items: center; padding: 0 6px; }
.extensions .bare { width: 32px; height: 34px; }
.extensions .avatar { width: 22px; height: 22px; margin: 0 5px; border-radius: 50%; background: #0288d1; color: #fff; font-size: 12px; }
.badge {
  position: absolute; right: 3px; bottom: 3px; width: 12px; height: 12px; border-radius: 2px;
  background: #5a5a5a; color: #fff; font: 700 10px/12px "Open Sans", sans-serif; text-align: center;
}
.badge-plum { background: #32003c; }

/* page */
.viewport { flex: 1; min-height: 0; display: flex; overflow: hidden; }
.page {
  flex: 1; min-width: 0; display: grid;
  grid-template-columns: minmax(200px, 724px) minmax(600px, 1064px) 1fr;
  grid-template-rows: auto 1fr;
}
.head { height: 53px; border-bottom: 5px solid; background: #fff; box-shadow: 0 3px 6px #0003; clip-path: inset(0 0 -12px 0); z-index: 1; }
.head-red { border-color: #990000; text-align: right; padding-right: 85px; }
.head-blue { border-color: #006699; padding-top: 8px; }
.head-green { border-color: #339966; }
.sitename { color: #001133; font: 26px/53px "Liberation Serif", serif; }
.searchbox { display: flex; height: 34px; border: 1px solid #ccc; box-shadow: inset 0 2px 4px #0002; padding: 2px 31px 0; align-items: center; }
.searchbox input { flex: 1; border: 0; padding: 0; background: none; font: inherit; }
.searchbox input::placeholder { color: #757575; opacity: 1; }

.side { display: flex; flex-direction: column; align-items: flex-end; padding: 60px 17px 0 0; }
.logo { width: 195px; text-align: center; margin-bottom: 69px; color: #4a4a4a; -webkit-text-stroke: 1px #4a4a4a; font: 700 51px/60px "DejaVu Sans", sans-serif; }
.navcard {
  display: flex; flex-direction: column; width: 195px; padding: 23px 22px 27px;
  background: #fdfdfd; border: 1px solid #eee; box-shadow: 0 2px 2px #0001;
}
.navcard h3 { font-size: 15px; border-bottom: 2px solid #ccc; margin-bottom: 8px; }

.content { background: #fff; border: solid #e8e8e8; border-width: 0 1px; padding: 24px 30px 0 31px; min-width: 0; }
.x { color: #3366bb; }
.ext { display: inline-block; width: 12px; height: 12px; margin-left: 3px; }
h1 { margin: 12px 15px 51px 0; border-bottom: 4px solid #dd4444; font: 30px/38px "Liberation Serif", serif; }
h1 a { font-size: 10px; line-height: 10px; }
blockquote { display: flex; gap: 8px; padding: 15px 6px 13px; border: 1px dashed #d6cf8e; background: #fffde5; white-space: nowrap; }
.mark { margin-top: -6px; }
.small { margin: 17px 0; font-size: 13px; line-height: 18px; }
.forms { border-collapse: collapse; margin-bottom: 31px; background: #f9f9f9; white-space: nowrap; }
.forms td { border: 1px solid #a2a2a2; padding: 3px 5px 3px 3px; height: 28px; }
.forms tr:first-child td { height: 31px; }
.big { font-family: "DejaVu Serif", "Liberation Serif", serif; font-size: 16px; line-height: 16px; }

.split { display: flex; align-items: flex-start; }
.entry { flex: 1; min-width: 0; line-height: 21px; white-space: nowrap; }
h2 { padding: 8px 0 1px; margin-bottom: 15px; border-bottom: 2px solid #1188dd; font: 26px/30px "Liberation Serif", serif; }
.sense { text-indent: 20px; }
.sense ~ .sense { margin-bottom: 2px; }
.sense b { color: #333399; font-weight: 700; margin-right: 3px; }
.w, .g, .p { padding: 2px 3px; border-radius: 6px; }
.w { background: #dce5f4; color: #223350; }
.g { background: #fde2c0; color: #221a10; }
.p { background: #ecdede; color: #201018; }

.toc { flex: none; width: 284px; padding: 19px 20px 20px 27px; border: 1px solid #eee; border-bottom-width: 3px; background: #fdfdfd; white-space: nowrap; }
.toc-head { display: flex; align-items: flex-end; gap: 9px; margin-bottom: 5px; }
.toc h3 { font-size: 18px; line-height: 23px; border-bottom: 1px solid #bbb; }
.toc .bare { font-size: 14px; line-height: 12px; color: #1188dd; }
.toc ul { list-style: none; padding-left: 13px; }
.toc .seen { color: #0066a0; }

.scrollbar { flex: none; display: flex; flex-direction: column; align-items: center; width: 17px; padding: 6px 0; background: #f1f1f1; }
.thumb { width: 13px; height: 70px; margin: 6px 0 auto; background: #c1c1c1; }

/* taskbar */
.taskbar { flex: none; display: flex; align-items: center; height: 41px; background: #474747; color: #fff; font-family: "Open Sans", sans-serif; font-size: 14px; }
.start { width: 48px; height: 41px; }
.tasksearch { display: flex; align-items: center; gap: 10px; width: 288px; height: 41px; padding-left: 11px; background: #f2f2f2; border: 1px solid #bbb; }
.tasksearch input { flex: 1; min-width: 0; border: 0; padding: 0; background: none; font: inherit; font-size: 15px; }
.tasksearch input::placeholder { color: #333; opacity: 1; }
.tasksearch svg:last-child { align-self: flex-end; }
.apps { display: flex; }
.apps .bare { width: 49px; height: 41px; }
.apps .running { background: #6b6b6b; border-bottom: 2px solid #76b9ed; }
.weather { display: flex; align-items: center; gap: 9px; margin: 0 24px 0 auto; }
.tray { display: flex; align-items: center; gap: 9px; }
.lang { margin: 0 11px 0 14px; font-size: 13px; }
.clock { display: flex; flex-direction: column; align-items: center; font-size: 12px; line-height: 18px; }
.notify { width: 44px; height: 41px; margin-right: 6px; }
.taskbar::after { content: ""; width: 5px; height: 41px; border-left: 1px solid #888; }
```
